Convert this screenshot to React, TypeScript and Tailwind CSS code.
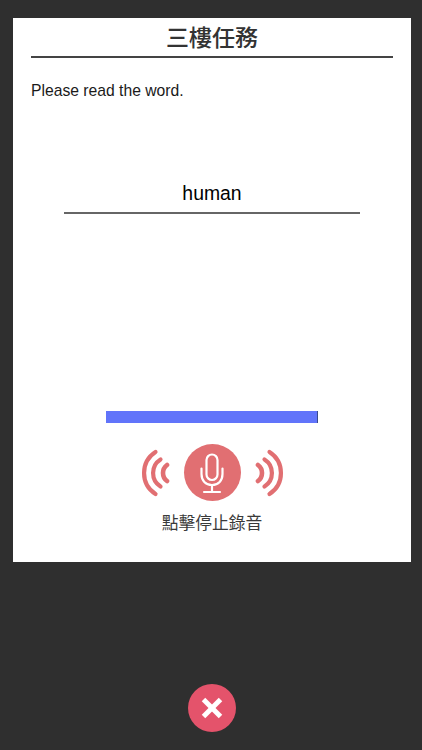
export default function App() {
  return (
    <div className="w-[422px] h-[750px] bg-[#2f2f2f] flex flex-col items-center pt-[18px] overflow-hidden font-['Liberation_Sans','Noto_Sans_CJK_TC',sans-serif]">
      <div className="w-[398px] ml-[2px] h-[544px] bg-white flex flex-col items-center px-[18px]">
        <div className="w-full h-[40px] pt-[2px] border-b-2 border-[#444444] flex items-center justify-center">
          <span className="text-[23px] leading-[38px] font-medium text-[#333333]">三樓任務</span>
        </div>
        <p className="w-full mt-[23px] text-[15.7px] leading-[20px] text-[#1a1a1a]">Please read the word.</p>
        <div className="mt-[71px] w-[296px] h-[42px] pt-[2px] border-b-2 border-[#666666] flex items-center justify-center">
          <span className="text-[19.4px] leading-[24px] text-black">human</span>
        </div>
        <div className="mt-[197px] w-[212px] h-[12px] bg-[#6174fa] border-r-[1.5px] border-[#3a4a8c]" />
        <div className="mt-[21px] flex items-center gap-[14px]">
          <svg width="29" height="48" viewBox="0 0 29 48" fill="none" stroke="#e16f72" strokeWidth="4.2" strokeLinecap="round">
            <path d="M14.5 3A25 25 0 0 0 14.5 45" />
            <path d="M19.5 10.5A16 16 0 0 0 19.5 37.5" />
            <path d="M26 16A10 10 0 0 0 26 32" strokeWidth="4.6" />
          </svg>
          <div className="w-[57px] h-[57px] rounded-full bg-[#e16f72] flex items-center justify-center">
            <svg width="26" height="42" viewBox="0 0 26 42" fill="none" stroke="white" strokeWidth="2.2" strokeLinecap="round">
              <rect x="7.5" y="2.5" width="11" height="25.5" rx="5.5" />
              <path d="M2.5 16.5V22C2.5 28.5 6.5 33 13 33C19.5 33 23.5 28.5 23.5 22V16.5" />
              <path d="M13 33V40" />
              <path d="M5 40H21" />
            </svg>
          </div>
          <svg width="29" height="48" viewBox="0 0 29 48" fill="none" stroke="#e16f72" strokeWidth="4.2" strokeLinecap="round">
            <path d="M14.5 3A25 25 0 0 1 14.5 45" />
            <path d="M9.5 10.5A16 16 0 0 1 9.5 37.5" />
            <path d="M3 16A10 10 0 0 1 3 32" strokeWidth="4.6" />
          </svg>
        </div>
        <p className="mt-[11px] text-[16.8px] leading-[24px] text-[#3a3a3a]">點擊停止錄音</p>
      </div>
      <div className="mt-[122px] ml-[2px] w-[48px] h-[48px] rounded-full bg-[#e4536b] flex items-center justify-center">
        <svg width="24" height="24" viewBox="0 0 24 24" fill="none" stroke="white" strokeWidth="5">
          <path d="M3.5 3.5L20.5 20.5" />
          <path d="M20.5 3.5L3.5 20.5" />
        </svg>
      </div>
    </div>
  );
}
